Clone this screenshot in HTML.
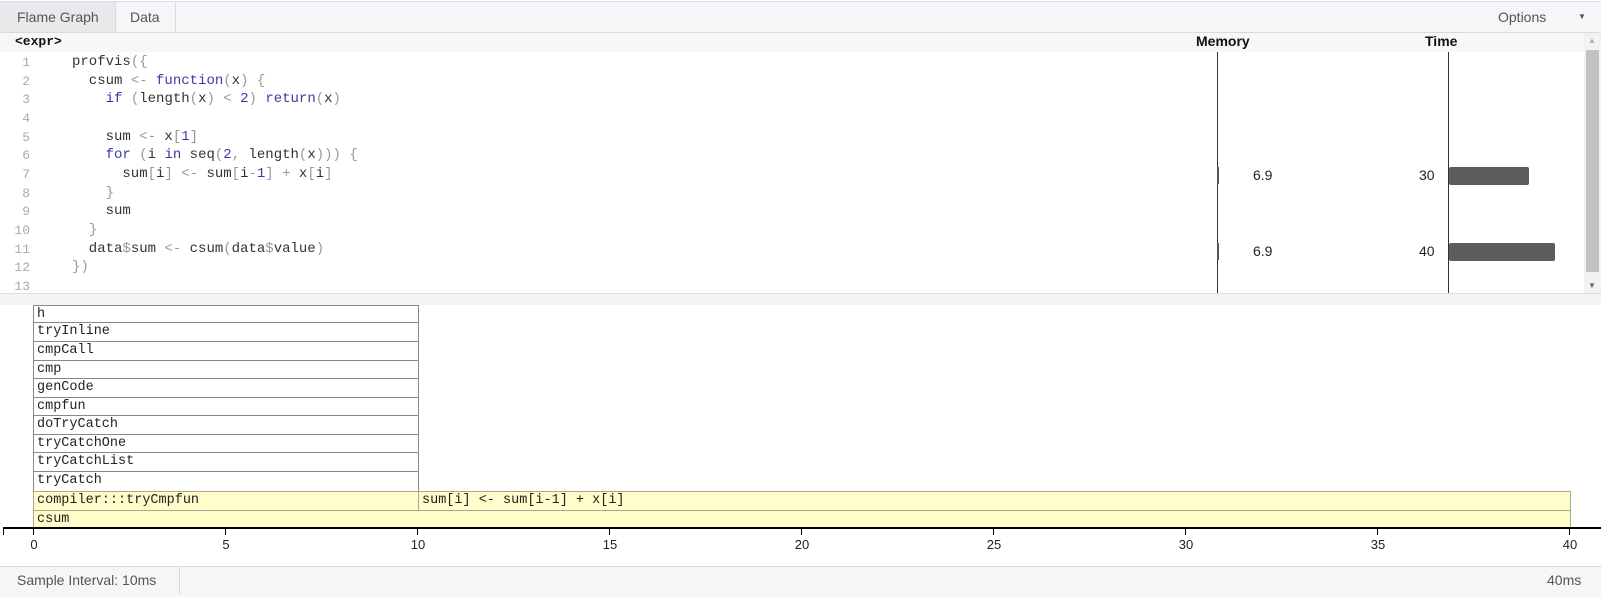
<!DOCTYPE html>
<html><head><style>
*{margin:0;padding:0;box-sizing:border-box}
body{width:1601px;height:597px;overflow:hidden;background:#fff;font-family:"Liberation Sans",sans-serif;position:relative;color:#333}
.a{position:absolute}
.mono{font-family:"Liberation Mono",monospace}
.ln{position:absolute;left:0;width:30px;text-align:right;color:#aaa;font-size:13px;font-family:"Liberation Mono",monospace}
.cd{position:absolute;left:72px;font-size:14px;font-family:"Liberation Mono",monospace;color:#333;white-space:pre}
.k{color:#3a3aa8}.p{color:#999}
.row{position:absolute;border:1px solid #888;font-family:"Liberation Mono",monospace;font-size:13.5px;padding-left:3px;line-height:17px;color:#222;white-space:pre;overflow:hidden}
.y{background:#fffdca;border-color:#aaa890}
.tk{position:absolute;top:528px;width:1px;height:7px;background:#000}
.tl{position:absolute;top:537px;font-size:13px;color:#222;width:30px;margin-left:-15px;text-align:center}
</style></head><body>
<div class="a" style="left:0;top:1px;width:1601px;height:32px;background:#f5f6f7;border-top:1px solid #dde;border-bottom:1px solid #d8dadd"></div>
<div class="a" style="left:0;top:2px;width:116px;height:30px;background:#e8e9ea;border-right:1px solid #d8dadd"></div>
<div class="a" style="left:116px;top:2px;width:60px;height:30px;border-right:1px solid #d8dadd"></div>
<div class="a" style="left:17px;top:9px;font-size:14px;color:#555">Flame Graph</div>
<div class="a" style="left:130px;top:9px;font-size:14px;color:#555">Data</div>
<div class="a" style="left:1498px;top:9px;font-size:14px;color:#555">Options</div>
<div class="a" style="left:1578px;top:12px;font-size:8px;color:#555">▼</div>
<div class="a" style="left:0;top:33px;width:1584px;height:19px;background:#f7f7f7"></div>
<div class="a mono" style="left:15px;top:34px;font-size:13px;font-weight:bold;color:#111">&lt;expr&gt;</div>
<div class="a" style="left:1196px;top:33px;font-size:14px;font-weight:bold;color:#111">Memory</div>
<div class="a" style="left:1425px;top:33px;font-size:14px;font-weight:bold;color:#111">Time</div>
<div class="a" style="left:1584px;top:33px;width:17px;height:260px;background:#f2f2f2"></div>
<div class="a" style="left:1586px;top:50px;width:13px;height:222px;background:#c2c2c2"></div>
<div class="a" style="left:1588px;top:36px;font-size:8px;color:#aaa">▲</div>
<div class="a" style="left:1588px;top:281px;font-size:8px;color:#666">▼</div>
<div class="ln" style="top:55px">1</div><div class="cd" style="top:54px">profvis<span class="p">({</span></div>
<div class="ln" style="top:74px">2</div><div class="cd" style="top:73px">  csum <span class="p">&lt;-</span> <span class="k">function</span><span class="p">(</span>x<span class="p">)</span> <span class="p">{</span></div>
<div class="ln" style="top:92px">3</div><div class="cd" style="top:91px">    <span class="k">if</span> <span class="p">(</span>length<span class="p">(</span>x<span class="p">)</span> <span class="p">&lt;</span> <span class="k">2</span><span class="p">)</span> <span class="k">return</span><span class="p">(</span>x<span class="p">)</span></div>
<div class="ln" style="top:111px">4</div>
<div class="ln" style="top:130px">5</div><div class="cd" style="top:129px">    sum <span class="p">&lt;-</span> x<span class="p">[</span><span class="k">1</span><span class="p">]</span></div>
<div class="ln" style="top:148px">6</div><div class="cd" style="top:147px">    <span class="k">for</span> <span class="p">(</span>i <span class="k">in</span> seq<span class="p">(</span><span class="k">2</span><span class="p">,</span> length<span class="p">(</span>x<span class="p">)))</span> <span class="p">{</span></div>
<div class="ln" style="top:167px">7</div><div class="cd" style="top:166px">      sum<span class="p">[</span>i<span class="p">]</span> <span class="p">&lt;-</span> sum<span class="p">[</span>i<span class="p">-</span><span class="k">1</span><span class="p">]</span> <span class="p">+</span> x<span class="p">[</span>i<span class="p">]</span></div>
<div class="ln" style="top:186px">8</div><div class="cd" style="top:185px">    <span class="p">}</span></div>
<div class="ln" style="top:204px">9</div><div class="cd" style="top:203px">    sum</div>
<div class="ln" style="top:223px">10</div><div class="cd" style="top:222px">  <span class="p">}</span></div>
<div class="ln" style="top:242px">11</div><div class="cd" style="top:241px">  data<span class="p">$</span>sum <span class="p">&lt;-</span> csum<span class="p">(</span>data<span class="p">$</span>value<span class="p">)</span></div>
<div class="ln" style="top:260px">12</div><div class="cd" style="top:259px"><span class="p">})</span></div>
<div class="ln" style="top:279px">13</div>
<div class="a" style="left:1217px;top:52px;width:1px;height:241px;background:#333"></div>
<div class="a" style="left:1448px;top:52px;width:1px;height:241px;background:#333"></div>
<div class="a" style="left:1217px;top:167px;width:2px;height:17px;background:#555"></div>
<div class="a" style="left:1217px;top:243px;width:2px;height:17px;background:#555"></div>
<div class="a" style="left:1253px;top:167px;font-size:14px;color:#222">6.9</div>
<div class="a" style="left:1253px;top:243px;font-size:14px;color:#222">6.9</div>
<div class="a" style="left:1419px;top:167px;font-size:14px;color:#222">30</div>
<div class="a" style="left:1419px;top:243px;font-size:14px;color:#222">40</div>
<div class="a" style="left:1449px;top:167px;width:80px;height:18px;background:#5c5c5c;border-radius:2px"></div>
<div class="a" style="left:1449px;top:243px;width:106px;height:18px;background:#5c5c5c;border-radius:2px"></div>
<div class="a" style="left:0;top:293px;width:1601px;height:12px;background:#f4f4f4;border-top:1px solid #ddd"></div>
<div class="row" style="left:33px;top:305px;width:386px;height:18px">h</div>
<div class="row" style="left:33px;top:322px;width:386px;height:20px">tryInline</div>
<div class="row" style="left:33px;top:341px;width:386px;height:20px">cmpCall</div>
<div class="row" style="left:33px;top:360px;width:386px;height:19px">cmp</div>
<div class="row" style="left:33px;top:378px;width:386px;height:20px">genCode</div>
<div class="row" style="left:33px;top:397px;width:386px;height:19px">cmpfun</div>
<div class="row" style="left:33px;top:415px;width:386px;height:20px">doTryCatch</div>
<div class="row" style="left:33px;top:434px;width:386px;height:19px">tryCatchOne</div>
<div class="row" style="left:33px;top:452px;width:386px;height:20px">tryCatchList</div>
<div class="row" style="left:33px;top:471px;width:386px;height:21px">tryCatch</div>
<div class="row y" style="left:33px;top:491px;width:386px;height:20px">compiler:::tryCmpfun</div>
<div class="row y" style="left:418px;top:491px;width:1153px;height:20px">sum[i] &lt;- sum[i-1] + x[i]</div>
<div class="row y" style="left:33px;top:510px;width:1538px;height:19px">csum</div>
<div class="a" style="left:3px;top:527px;width:1598px;height:2px;background:#000"></div>
<div class="tk" style="left:3px"></div>
<div class="tk" style="left:33px"></div><div class="tl" style="left:34px">0</div>
<div class="tk" style="left:225px"></div><div class="tl" style="left:226px">5</div>
<div class="tk" style="left:417px"></div><div class="tl" style="left:418px">10</div>
<div class="tk" style="left:609px"></div><div class="tl" style="left:610px">15</div>
<div class="tk" style="left:801px"></div><div class="tl" style="left:802px">20</div>
<div class="tk" style="left:993px"></div><div class="tl" style="left:994px">25</div>
<div class="tk" style="left:1185px"></div><div class="tl" style="left:1186px">30</div>
<div class="tk" style="left:1377px"></div><div class="tl" style="left:1378px">35</div>
<div class="tk" style="left:1569px"></div><div class="tl" style="left:1570px">40</div>
<div class="a" style="left:0;top:566px;width:1601px;height:31px;background:#f5f6f7;border-top:1px solid #d8dadd"></div>
<div class="a" style="left:179px;top:567px;width:1px;height:28px;background:#d8dadd"></div>
<div class="a" style="left:17px;top:572px;font-size:14px;color:#555">Sample Interval: 10ms</div>
<div class="a" style="left:1547px;top:572px;font-size:14px;color:#555">40ms</div>
</body></html>
